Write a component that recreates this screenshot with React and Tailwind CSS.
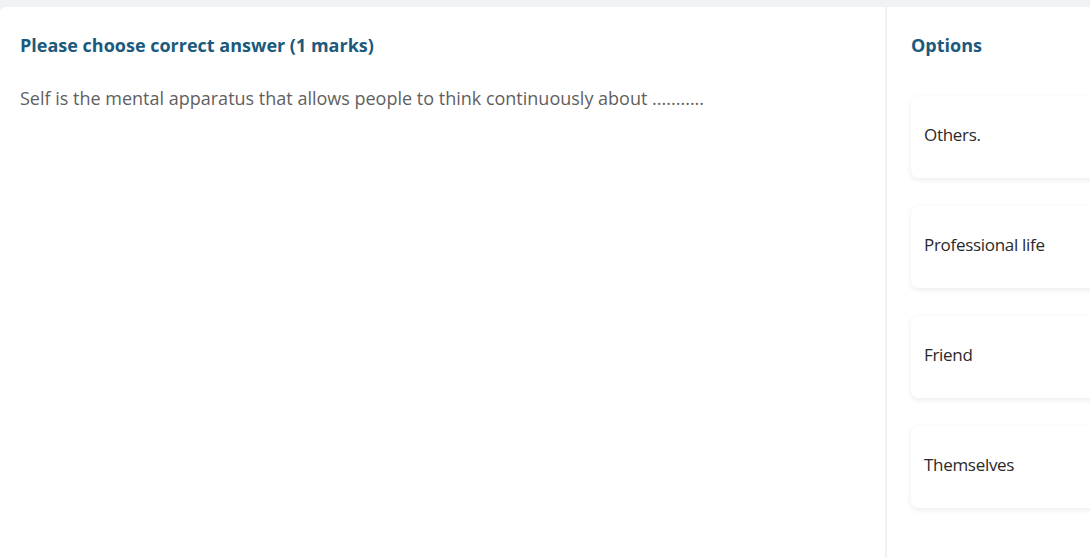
import React from 'react';

const options = ['Others.', 'Professional life', 'Friend', 'Themselves'];

export default function App() {
  return (
    <div className="h-[558px] w-[1090px] overflow-hidden bg-[#f1f2f4] pt-[7px] font-['Open_Sans',sans-serif]">
      <div className="flex h-full rounded-tl-md bg-white">
        {/* question */}
        <div className="w-[887px] shrink-0 border-r-2 border-[#f1f2f4] px-5 pt-[26px]">
          <h2 className="text-[18px] font-bold leading-6 text-[#1b5a7c]">
            Please choose correct answer (1 marks)
          </h2>
          <p className="mt-[29px] text-[18px] leading-6 text-[#5f5f5f]">
            Self is the mental apparatus that allows people to think continuously about ...........
          </p>
        </div>

        {/* options */}
        <div className="flex-1 pl-[24px] pt-[26px]">
          <h3 className="text-[18px] font-bold leading-6 text-[#1b5a7c]">Options</h3>
          <div className="mt-[39px] flex w-[220px] flex-col gap-[28px]">
            {options.map((opt) => (
              <div
                key={opt}
                className="flex h-[82px] items-center rounded-lg bg-white px-[13px] pb-1 text-[17px] tracking-[-0.3px] text-[#2a2a2a] shadow-[0_2px_6px_rgba(0,0,0,0.08)]"
              >
                {opt}
              </div>
            ))}
          </div>
        </div>
      </div>
    </div>
  );
}
